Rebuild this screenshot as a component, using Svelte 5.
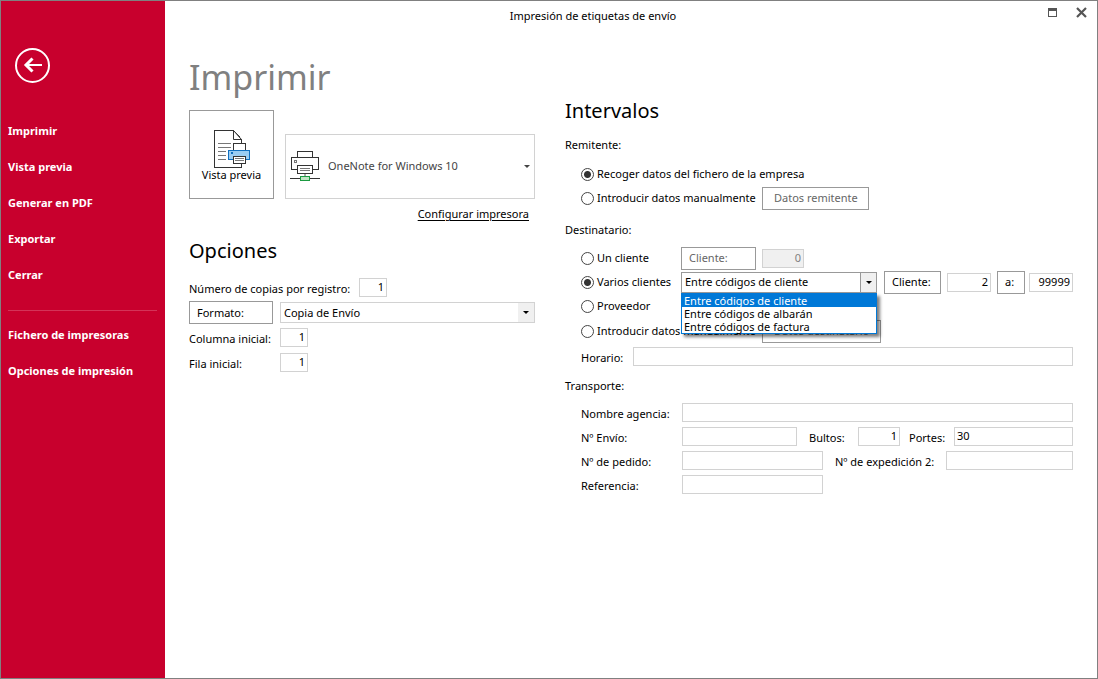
<script lang="ts">
  const mainMenu = ['Imprimir', 'Vista previa', 'Generar en PDF', 'Exportar', 'Cerrar'];
  const setupMenu = ['Fichero de impresoras', 'Opciones de impresión'];

  const ranges = [
    'Entre códigos de cliente',
    'Entre códigos de albarán',
    'Entre códigos de factura',
  ];

  let printer = $state('OneNote for Windows 10');
  let copies = $state('1');
  let format = $state('Copia de Envío');
  let column = $state('1');
  let row = $state('1');

  let sender = $state('fichero');
  let recipient = $state('varios');
  let client = $state('0');
  let range = $state(ranges[0]);
  let listOpen = $state(true);
  let from = $state('2');
  let to = $state('99999');
  let packages = $state('1');
  let shipping = $state('30');

  function pick(item: string) {
    range = item;
    listOpen = false;
  }
</script>

<div class="window">
  <aside class="sidebar">
    <button class="back" aria-label="Volver">
      <svg width="35" height="35" viewBox="0 0 35 35" fill="none" stroke="#fff">
        <circle cx="17.5" cy="17.5" r="16.5" stroke-width="2" />
        <path d="M10 17H27" stroke-width="2" />
        <path d="M17.5 10.5L11 17L17.5 23.5" stroke-width="3" />
      </svg>
    </button>
    <nav>
      {#each mainMenu as item}
        <a href="#top">{item}</a>
      {/each}
      <hr />
      {#each setupMenu as item}
        <a href="#top">{item}</a>
      {/each}
    </nav>
  </aside>

  <main>
    <header class="titlebar">
      <span class="caption">Impresión de etiquetas de envío</span>
      <div class="controls">
        <button aria-label="Maximizar">
          <svg width="11" height="11" viewBox="0 0 11 11" shape-rendering="crispEdges">
            <path d="M1 1H10V10H1Z M2 4V9H9V4Z" fill="#555" fill-rule="evenodd" />
          </svg>
        </button>
        <button aria-label="Cerrar ventana">
          <svg width="11" height="11" viewBox="0 0 11 11">
            <path d="M1 1L10 10M10 1L1 10" stroke="#555" stroke-width="2.2" />
          </svg>
        </button>
      </div>
    </header>

    <div class="columns">
      <section>
        <h1>Imprimir</h1>
        <div class="print-row">
          <button class="btn preview">
            <svg width="37" height="39" viewBox="0 0 37 39" fill="#fff" stroke="#333" shape-rendering="crispEdges">
              <path d="M1.5 1.5H20.5L28.5 10.5V38.5H1.5Z" />
              <path d="M20.5 1.5V10.5H28.5Z" shape-rendering="auto" />
              <path d="M5 14.5H18M5 18.5H18M5 22.5H13M5 26.5H13M5 30.5H13" stroke="#777" />
              <path d="M20.5 14.5H32.5V22.5H20.5Z" />
              <path d="M15.5 21.5H36.5V30.5H15.5Z" fill="#9acdf3" stroke="#1170c0" />
              <path d="M18 23H20V25H18Z" fill="#1170c0" stroke="none" />
              <path d="M20.5 27.5H32.5V34.5H20.5Z" />
              <path d="M22 29.5H31M22 31.5H31" stroke="#777" />
            </svg>
            <span>Vista previa</span>
          </button>
          <div class="printer">
            <svg width="30" height="31" viewBox="0 0 30 31" fill="#fff" stroke="#333" shape-rendering="crispEdges">
              <path d="M7.5 .5H22.5V6.5H7.5Z" />
              <path d="M1.5 6.5H28.5V18.5H1.5Z" />
              <path d="M4.5 9.5H6.5V11.5H4.5Z" stroke="#777" />
              <path d="M7.5 14.5H22.5V22.5H7.5Z" />
              <path d="M10 17.5H20M10 19.5H20" stroke="#777" />
              <path d="M15 23V26" stroke="#aaa" stroke-width="2" />
              <path d="M0 27.5H30" />
              <path d="M10.5 25.5H19.5V29.5H10.5Z" fill="#bfe3c3" stroke="#1b9a41" />
            </svg>
            <select aria-label="Impresora" bind:value={printer}>
              <option>OneNote for Windows 10</option>
            </select>
            <i class="arrow"></i>
          </div>
        </div>
        <a class="configure" href="#top">Configurar impresora</a>

        <h2>Opciones</h2>
        <div class="row">
          <label class="copies" for="copies">Número de copias por registro:</label>
          <input id="copies" class="num tiny" bind:value={copies} />
        </div>
        <div class="row">
          <button class="btn format">Formato:</button>
          <div class="combo grow">
            <select aria-label="Formato" bind:value={format}>
              <option>Copia de Envío</option>
            </select>
            <span class="drop"><i class="arrow"></i></span>
          </div>
        </div>
        <div class="row">
          <label class="start" for="column">Columna inicial:</label>
          <input id="column" class="num tiny" bind:value={column} />
        </div>
        <div class="row">
          <label class="start" for="row">Fila inicial:</label>
          <input id="row" class="num tiny" bind:value={row} />
        </div>
      </section>

      <section class="ranges">
        <h2>Intervalos</h2>

        <h3>Remitente:</h3>
        <div class="group">
          <div class="row">
            <label class="radio">
              <input type="radio" value="fichero" bind:group={sender} />
              Recoger datos del fichero de la empresa
            </label>
          </div>
          <div class="row">
            <label class="radio wide">
              <input type="radio" value="manual" bind:group={sender} />
              Introducir datos manualmente
            </label>
            <button class="btn sender" disabled>Datos remitente</button>
          </div>
        </div>

        <h3>Destinatario:</h3>
        <div class="group recipients">
          <div class="row">
            <label class="radio short">
              <input type="radio" value="uno" bind:group={recipient} />
              Un cliente
            </label>
            <button class="btn client" disabled>Cliente:</button>
            <input class="num small" aria-label="Código de cliente" bind:value={client} disabled />
          </div>
          <div class="row">
            <label class="radio short">
              <input type="radio" value="varios" bind:group={recipient} />
              Varios clientes
            </label>
            <div class="combo focus">
              <button
                class="current"
                role="combobox"
                aria-label="Tipo de intervalo"
                aria-controls="range-list"
                aria-expanded={listOpen}
                onclick={() => (listOpen = !listOpen)}
              >
                {range}
              </button>
              <span class="drop"><i class="arrow"></i></span>
              {#if listOpen}
                <div class="list" id="range-list" role="listbox">
                  {#each ranges as item}
                    <button role="option" aria-selected={item === range} onclick={() => pick(item)}>
                      {item}
                    </button>
                  {/each}
                </div>
              {/if}
            </div>
            <div class="between">
              <button class="btn from">Cliente:</button>
              <input class="num" aria-label="Desde" bind:value={from} />
              <button class="btn to">a:</button>
              <input class="num" aria-label="Hasta" bind:value={to} />
            </div>
          </div>
          <div class="row">
            <label class="radio">
              <input type="radio" value="proveedor" bind:group={recipient} />
              Proveedor
            </label>
          </div>
          <div class="row spaced">
            <label class="radio wide">
              <input type="radio" value="manual" bind:group={recipient} />
              Introducir datos manualmente
            </label>
            <button class="btn recipient" disabled>Datos destinatario</button>
          </div>
          <div class="row spaced">
            <label class="schedule" for="schedule">Horario:</label>
            <input id="schedule" class="grow" />
          </div>
        </div>

        <h3>Transporte:</h3>
        <div class="group transport">
          <div class="row">
            <label class="field" for="agency">Nombre agencia:</label>
            <input id="agency" class="grow" />
          </div>
          <div class="row">
            <label class="field" for="shipment">Nº Envío:</label>
            <input id="shipment" class="shipment" />
            <label class="packages" for="packages">Bultos:</label>
            <input id="packages" class="num small" bind:value={packages} />
            <label class="shipping" for="shipping">Portes:</label>
            <input id="shipping" class="grow" bind:value={shipping} />
          </div>
          <div class="row">
            <label class="field" for="order">Nº de pedido:</label>
            <input id="order" class="order" />
            <label class="dispatch" for="dispatch">Nº de expedición 2:</label>
            <input id="dispatch" class="grow" />
          </div>
          <div class="row">
            <label class="field" for="reference">Referencia:</label>
            <input id="reference" class="order" />
          </div>
        </div>
      </section>
    </div>
  </main>
</div>

<style>
  :global(body) {
    margin: 0;
    background: #fff;
  }

  .window,
  .window * {
    box-sizing: border-box;
  }

  .window {
    display: grid;
    grid-template-columns: 164px minmax(0, 1fr);
    min-height: 100vh;
    border: 1px solid #808080;
    background: #fff;
    color: #000;
    font: 11px/16px "Noto Sans", "Open Sans", sans-serif;
  }

  button,
  input,
  select {
    margin: 0;
    border: 0;
    border-radius: 0;
    background: none;
    color: inherit;
    font: inherit;
    outline: none;
  }

  .sidebar {
    padding: 47px 8px 24px 7px;
    background: #c8002d;
    color: #fff;
  }

  .back {
    display: block;
    margin: 0 0 30px 7px;
    padding: 0;
  }

  .back svg {
    display: block;
  }

  nav {
    display: flex;
    flex-direction: column;
    font-weight: bold;
  }

  nav a {
    color: inherit;
    line-height: 36px;
    text-decoration: none;
  }

  nav hr {
    width: 100%;
    height: 1px;
    margin: 17px 0 6px;
    border: 0;
    background: #d43358;
  }

  .titlebar {
    display: flex;
    height: 30px;
  }

  .caption {
    flex: 1;
    line-height: 30px;
    text-align: center;
  }

  .controls {
    display: flex;
    justify-content: flex-end;
    align-items: center;
    gap: 18px;
    width: 76px;
    height: 23px;
    padding-right: 10px;
  }

  .controls button {
    padding: 0;
  }

  .controls svg {
    display: block;
  }

  .columns {
    display: grid;
    grid-template-columns: 346px minmax(0, 1fr);
    gap: 30px;
    padding: 22px 24px 24px;
  }

  h1,
  h2,
  h3 {
    margin: 0;
    font-weight: normal;
  }

  h1 {
    height: 57px;
    color: #808080;
    font-size: 34px;
    line-height: 48px;
  }

  h2 {
    font-size: 20px;
    line-height: 28px;
  }

  h3 {
    font-size: 11px;
    line-height: 16px;
  }

  .print-row {
    display: flex;
    align-items: flex-end;
    gap: 11px;
    margin-bottom: 7px;
  }

  .btn {
    height: 23px;
    padding: 0 7px;
    border: 1px solid #999;
    background: #fff;
    text-align: left;
    white-space: nowrap;
  }

  .btn:disabled {
    color: #666;
  }

  .preview {
    display: flex;
    flex-direction: column;
    align-items: center;
    width: 85px;
    height: 89px;
    padding: 18px 0 0;
  }

  .preview span {
    line-height: 14px;
  }

  .printer {
    display: flex;
    flex: 1;
    align-items: center;
    gap: 4px;
    height: 65px;
    padding: 0 4px;
    border: 1px solid #d2d2d2;
    color: #444;
  }

  select {
    flex: 1;
    min-width: 0;
    padding: 0 3px;
    appearance: none;
  }

  .printer select {
    padding: 0 4px 2px;
  }

  .arrow {
    width: 0;
    height: 0;
    border: solid transparent;
    border-width: 3px 3px 0;
    border-top-color: currentColor;
  }

  .configure {
    display: block;
    margin: 0 6px 15px 0;
    color: #000;
    text-align: right;
    text-underline-offset: 2px;
  }

  .configure + h2 {
    margin-bottom: 10px;
  }

  .row {
    display: flex;
    align-items: center;
    height: 25px;
    white-space: nowrap;
  }

  .row > label {
    padding-top: 2px;
  }

  .grow {
    flex: 1;
    min-width: 0;
  }

  input:not([type='radio']) {
    height: 19px;
    padding: 0 2px 2px;
    border: 1px solid #d2d2d2;
    background: #fff;
  }

  input:disabled:not([type='radio']) {
    background: #f0f0f0;
    color: #808080;
  }

  .num {
    text-align: right;
  }

  .tiny {
    width: 28px;
  }

  .small {
    width: 42px;
  }

  .copies {
    width: 170px;
  }

  .format {
    width: 84px;
    margin-right: 7px;
  }

  .start {
    width: 91px;
  }

  .combo {
    position: relative;
    display: flex;
    height: 21px;
    border: 1px solid #d2d2d2;
  }

  .drop {
    display: flex;
    align-items: center;
    justify-content: center;
    width: 16px;
    background: #f0f0f0;
    pointer-events: none;
  }

  .ranges {
    padding-top: 44px;
  }

  .ranges h2 {
    margin: 0 0 12px;
  }

  .group {
    margin: 9px 0 12px;
    padding-left: 16px;
  }

  .ranges .row {
    height: 24px;
  }

  .ranges .row > label {
    padding-top: 3px;
  }

  .radio {
    display: flex;
    align-items: center;
    gap: 3px;
  }

  .ranges .row > .radio {
    padding: 0;
  }

  .short {
    width: 100px;
  }

  .wide {
    width: 181px;
  }

  input[type='radio'] {
    width: 13px;
    height: 13px;
    border: 1px solid #444;
    border-radius: 50%;
    background: #fff;
    appearance: none;
  }

  input[type='radio']:checked {
    background: radial-gradient(circle, #333 3px, #fff 4px);
  }

  .sender {
    width: 107px;
    padding: 0 11px;
  }

  .client {
    width: 75px;
    margin-right: 6px;
  }

  .focus {
    width: 196px;
    border-color: #999;
  }

  .focus .drop {
    border-left: 1px solid #999;
  }

  .current {
    flex: 1;
    padding: 0 3px;
    text-align: left;
  }

  .list {
    position: absolute;
    z-index: 1;
    top: 20px;
    left: -1px;
    right: -1px;
    border: 1px solid #0078d7;
    background: #fff;
    box-shadow: 3px 3px 3px rgba(0, 0, 0, 0.5);
  }

  .list button {
    display: block;
    width: 100%;
    height: 13px;
    padding: 0 2px;
    line-height: 13px;
    text-align: left;
  }

  .list button[aria-selected='true'] {
    background: #0078d7;
    color: #fff;
  }

  .between {
    display: flex;
    flex: 1;
    align-items: center;
    min-width: 0;
    margin-left: 7px;
  }

  .between input {
    flex: 1;
    min-width: 0;
  }

  .from {
    width: 57px;
    margin-right: 6px;
  }

  .to {
    width: 28px;
    margin: 0 4px 0 6px;
  }

  .recipient {
    width: 119px;
    padding: 0 11px;
  }

  .recipients {
    margin: 8px 0 10px;
  }

  .spaced {
    margin-top: 1px;
  }

  .schedule {
    width: 52px;
  }

  .transport {
    margin-top: 6px;
  }

  .field {
    width: 101px;
  }

  .shipment {
    width: 115px;
  }

  .order {
    width: 141px;
  }

  .packages {
    width: 61px;
    padding-left: 12px;
  }

  .shipping {
    width: 54px;
    padding-left: 9px;
  }

  .dispatch {
    width: 123px;
    padding-left: 12px;
  }
</style>
